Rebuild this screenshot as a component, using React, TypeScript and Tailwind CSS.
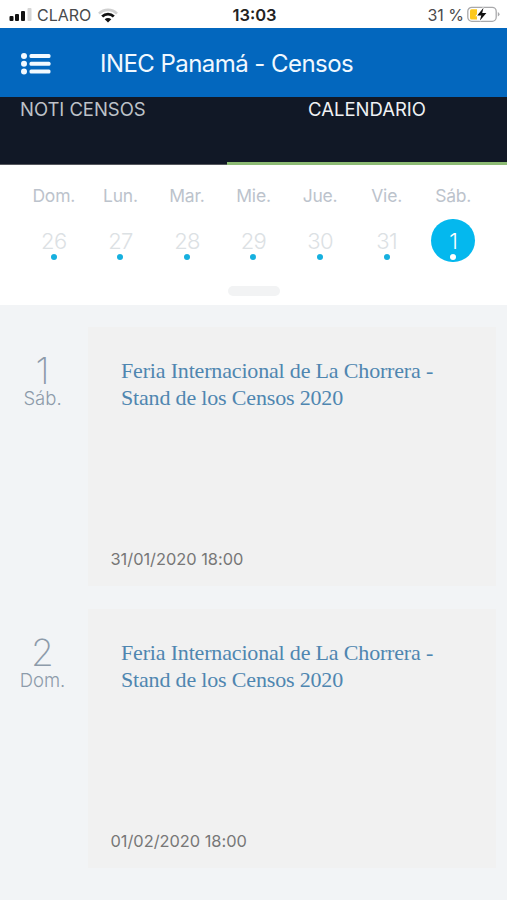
const week = [
  { label: 'Dom.', date: 26 },
  { label: 'Lun.', date: 27 },
  { label: 'Mar.', date: 28 },
  { label: 'Mie.', date: 29 },
  { label: 'Jue.', date: 30 },
  { label: 'Vie.', date: 31 },
  { label: 'Sáb.', date: 1, selected: true },
];

const events = [
  { date: 1, weekday: 'Sáb.', time: '31/01/2020 18:00' },
  { date: 2, weekday: 'Dom.', time: '01/02/2020 18:00' },
];

function StatusBar() {
  return (
    <div className="grid h-7 shrink-0 grid-cols-3 items-center bg-white pl-[9px] pr-[7px] text-[16px] leading-5 text-[#4a4a4c]">
      <div className="flex items-center pt-[2px]">
        <svg width="23" height="14" viewBox="0 0 23 14" className="shrink-0">
          <rect x="0.5" y="8" width="4" height="5" rx="1" fill="#111" />
          <rect x="6" y="6" width="4" height="7" rx="1" fill="#111" />
          <rect x="12" y="3" width="4" height="10" rx="1" fill="#111" />
          <rect x="18.5" y="0" width="4" height="13" rx="1" fill="#d6d6d6" />
        </svg>
        <span className="ml-[5px]">CLARO</span>
        <svg width="20" height="15" viewBox="0 0 20 15" className="ml-[7px] shrink-0">
          <path d="M1 5.6C6 .6 14 .6 19 5.6" fill="none" stroke="#d0d0d0" strokeWidth="2.6" />
          <path d="M4.2 8.6c3.3-3.2 8.3-3.2 11.6 0" fill="none" stroke="#111" strokeWidth="2.8" />
          <path d="M6.7 11.3c1.9-1.8 4.7-1.8 6.6 0L10 14.5z" fill="#111" />
        </svg>
      </div>
      <div className="pt-[2px] text-center text-[16.5px] font-semibold text-[#222]">13:03</div>
      <div className="flex items-center justify-end pt-[2px]">
        <span className="whitespace-nowrap">31 %</span>
        <svg width="33" height="16" viewBox="0 0 33 16" className="ml-[3px] -translate-y-[1px] shrink-0">
          <rect x="0.8" y="1.3" width="28.4" height="14" rx="4" fill="#fff" stroke="#a9a9ab" strokeWidth="1.3" />
          <path d="M4.5 3.3H10v10.2H4.5Q3 13.5 3 12V4.8Q3 3.3 4.5 3.3" fill="#fdc81c" />
          <path d="M30.8 6v4.5q1.7-.8 1.7-2.25T30.8 6" fill="#a9a9ab" />
          <path d="M16.5 1.8 10.2 9.4h4.1l-1.5 5.4 6.6-7.8h-4.200z" fill="#111" stroke="#fff" strokeWidth="1.800" paintOrder="stroke" />
        </svg>
      </div>
    </div>
  );
}

export default function App() {
  return (
    <div className="flex h-[900px] w-[507px] flex-col overflow-hidden bg-[#f2f4f6] font-['Inter','Liberation_Sans',sans-serif]">
      <StatusBar />
      <header className="flex h-[69px] shrink-0 items-center bg-[#0367be] pl-[21px] pt-[2px] text-white">
        <svg width="30" height="24" viewBox="0 0 30 24" fill="#f2f9ff" className="shrink-0">
          <circle cx="3" cy="4" r="3" />
          <circle cx="3" cy="11.7" r="3" />
          <circle cx="3" cy="19.5" r="3" />
          <rect x="8.5" y="2" width="21" height="4" rx="1.5" />
          <rect x="8.5" y="9.7" width="21" height="4" rx="1.5" />
          <rect x="8.5" y="17.5" width="21" height="4" rx="1.5" />
        </svg>
        <h1 className="ml-[49px] whitespace-nowrap text-2xl tracking-[-0.55px] text-[#f0f8ff]">INEC Panamá - Censos</h1>
      </header>
      <nav className="flex h-[68px] shrink-0 bg-[#111826] text-[18.5px] leading-6">
        <div className="w-[227px] border-b border-[#55575d] pl-5 tracking-[-0.05px] text-[#bec2c8]">NOTI CENSOS</div>
        <div className="flex-1 border-b-[3px] border-[#8dbb74] text-center text-[#eff1f4]">CALENDARIO</div>
      </nav>
      <section className="flex h-[140px] shrink-0 flex-col bg-white px-[20.5px] pt-[19px]">
        <div className="grid grid-cols-7">
          {week.map((day) => (
            <div key={day.label} className="flex flex-col items-center">
              <span className="text-[17.5px] leading-6 tracking-[-0.2px] text-[#bcc3cc]">{day.label}</span>
              <div
                className={
                  day.selected
                    ? 'mt-[11px] flex h-[43px] w-[44px] flex-col items-center rounded-full bg-[#04b8ee] pt-[10px] text-white'
                    : 'mt-[11px] flex h-[43px] w-[44px] flex-col items-center pt-[10px] text-[#dce1e4]'
                }
              >
                <span className="text-[22px] font-light leading-6 tracking-[-0.7px]">{day.date}</span>
                <span className={day.selected ? 'mt-[1px] h-[6px] w-[6px] rounded-full bg-white' : 'mt-[1px] h-[6px] w-[6px] rounded-full bg-[#16b0df]'} />
              </div>
            </div>
          ))}
        </div>
        <div className="mt-[24px] h-[10px] w-[52px] self-center rounded-[5px] bg-[#f2f3f4]" />
      </section>
      <main className="flex flex-col gap-[23px] pt-[22px]">
        {events.map((event) => (
          <article key={event.date} className="flex h-[259px]">
            <div className="flex w-[85px] flex-col items-center pt-[27px] text-[#8d9baa]">
              <span className="text-[37px] font-extralight leading-[34px]">{event.date}</span>
              <span className="text-[18.5px] font-light leading-[20px]">{event.weekday}</span>
            </div>
            <div className="ml-[3px] flex w-[408px] flex-col justify-between bg-[#f1f1f1] pb-[15px] pl-[22.5px] pt-[30px]">
              <h2 className="pl-[10.5px] font-['Liberation_Serif',serif] text-[22px] leading-[27px] tracking-[-0.17px] text-[#4f86b0]">
                Feria Internacional de La Chorrera -<br />
                Stand de los Censos 2020
              </h2>
              <time className="text-[16.4px] leading-6 tracking-[-0.02px] text-[#777]">{event.time}</time>
            </div>
          </article>
        ))}
      </main>
    </div>
  );
}
